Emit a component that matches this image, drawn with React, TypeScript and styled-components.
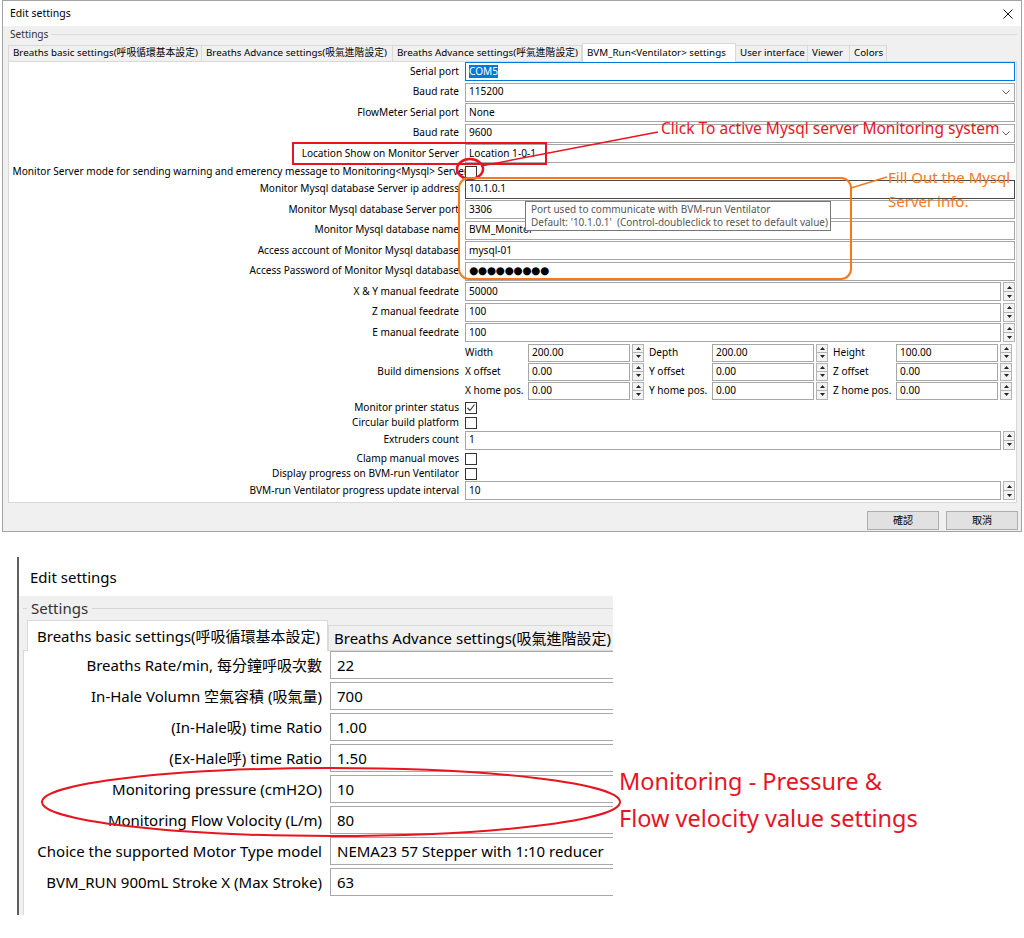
import React from "react";
import styled, { createGlobalStyle, css } from "styled-components";

const FONT = `"Noto Sans", "Noto Sans CJK TC", sans-serif`;
const RED = "#e8141f";
const ORANGE = "#f47920";

const GlobalStyle = createGlobalStyle`
  * { box-sizing: border-box; }
  html, body { margin: 0; padding: 0; background: #ffffff; }
  body { font-family: ${FONT}; color: #000; }
`;

const Page = styled.div`
  position: relative;
  width: 1024px;
  height: 938px;
  overflow: hidden;
  background: #fff;
`;

/* ---------------- top window ---------------- */
const Window = styled.div`
  margin-left: 2px;
  width: 1020px;
  height: 532px;
  border: 1px solid #a3a3a3;
  background: #f0f0f0;
  display: flex;
  flex-direction: column;
  font-size: 10.1px;
  line-height: 1.1;
`;

const TitleBar = styled.div`
  height: 25px;
  flex: none;
  background: #fff;
  display: flex;
  align-items: center;
  justify-content: space-between;
  padding: 0 8px 0 7px;
  font-size: 10.5px;
`;

const WinBody = styled.div`
  flex: 1;
  display: flex;
  flex-direction: column;
  padding: 0 4px 0 5px;
`;

const GroupHeader = styled.div`
  height: 17px;
  flex: none;
  display: flex;
  align-items: center;
  gap: 3px;
  padding-left: 2px;
  color: #333;
  &::after {
    content: "";
    flex: 1;
    height: 1px;
    background: #dcdcdc;
  }
`;

const TabStrip = styled.div`
  height: 18px;
  flex: none;
  display: flex;
  align-items: flex-end;
  position: relative;
  z-index: 1;
`;

const Tab = styled.div<{ $w: number; $active?: boolean }>`
  width: ${(p) => p.$w}px;
  flex: none;
  height: ${(p) => (p.$active ? 19 : 16)}px;
  margin-bottom: ${(p) => (p.$active ? -1 : 0)}px;
  background: ${(p) => (p.$active ? "#fff" : "#f0f0f0")};
  border: 1px solid #d9d9d9;
  border-bottom: none;
  border-left-width: ${(p) => (p.$active ? 1 : 0)}px;
  padding-left: 4px;
  font-size: 9.8px;
  display: flex;
  align-items: center;
  white-space: nowrap;
  overflow: hidden;
  &:first-child {
    border-left-width: 1px;
  }
`;

const Panel = styled.div`
  position: relative;
  height: 442px;
  flex: none;
  background: #fff;
  border: 1px solid #d9d9d9;
  padding-right: 1px;
  display: flex;
  flex-direction: column;
`;

const Row = styled.div<{ $h: number; $gap?: number }>`
  display: grid;
  grid-template-columns: 450px 550px;
  column-gap: 6px;
  height: ${(p) => p.$h}px;
  margin-bottom: ${(p) => p.$gap ?? 0}px;
  align-items: center;
  flex: none;
`;

const Label = styled.div<{ $bleed?: boolean }>`
  display: flex;
  justify-content: flex-end;
  align-items: center;
  white-space: nowrap;
  height: 100%;
  ${(p) =>
    p.$bleed &&
    css`
      margin-right: -9px;
    `}
`;

const toneColor = (t?: string) =>
  t === "focus" ? "#0078d7" : t === "dark" ? "#4a4a4a" : "#a6a6a6";

const Field = styled.div<{ $tone?: string; $h?: number; $w?: number }>`
  height: ${(p) => p.$h ?? 19}px;
  width: ${(p) => (p.$w ? `${p.$w}px` : "100%")};
  flex: ${(p) => (p.$w ? "none" : "1")};
  border: 1px solid ${(p) => toneColor(p.$tone)};
  background: #fff;
  display: flex;
  align-items: center;
  padding: 0 4px 0 3px;
  white-space: nowrap;
  overflow: hidden;
`;

const Selected = styled.span`
  background: #0078d7;
  color: #fff;
  padding: 1px 0;
`;

const Dots = styled.span`
  font-family: "DejaVu Sans", sans-serif;
  font-size: 10.5px;
  letter-spacing: -0.3px;
`;

const Chevron = styled.svg`
  margin-left: auto;
  flex: none;
`;

const SpinBox = styled.div<{ $h?: number }>`
  display: flex;
  height: ${(p) => p.$h ?? 19}px;
  gap: 2px;
  width: 100%;
`;

const SpinCol = styled.div`
  width: 12px;
  flex: none;
  display: flex;
  flex-direction: column;
  height: 100%;
`;

const SpinBtn = styled.div`
  flex: 1;
  border: 1px solid #b4b4b4;
  background: #f3f3f3;
  display: flex;
  align-items: center;
  justify-content: center;
  & + & {
    margin-top: -1px;
  }
`;

const Check = styled.div`
  width: 12px;
  height: 12px;
  border: 1px solid #333;
  background: #fff;
  position: relative;
  z-index: 1;
  display: flex;
  align-items: center;
  justify-content: center;
`;

const DimRows = styled.div`
  display: flex;
  flex-direction: column;
  gap: 1px;
  height: 100%;
`;

const DimRow = styled.div`
  display: flex;
  height: 18px;
  align-items: center;
`;

const DimCell = styled.div`
  display: flex;
  height: 100%;
  align-items: center;
  margin-right: 5px;
`;

const DimLabel = styled.div`
  width: 63px;
  flex: none;
  white-space: nowrap;
`;

const ButtonBar = styled.div`
  flex: 1;
  display: flex;
  justify-content: flex-end;
  align-items: flex-start;
  padding-top: 8px;
  gap: 7px;
  margin-right: -1px;
`;

const Btn = styled.div`
  width: 72px;
  height: 19px;
  background: #e1e1e1;
  border: 1px solid #adadad;
  display: flex;
  align-items: center;
  justify-content: center;
`;

const Tooltip = styled.div`
  position: absolute;
  left: 525px;
  top: 201px;
  width: 306px;
  height: 30px;
  background: #fff;
  border: 1px solid #767676;
  color: #575757;
  font-size: 10px;
  line-height: 13px;
  padding: 1px 0 0 5px;
  white-space: nowrap;
  z-index: 5;
`;

/* ---------------- bottom shot ---------------- */
const Shot = styled.div`
  margin: 25px 0 0 17px;
  width: 596px;
  height: 358px;
  border-left: 2px solid #5f5f5f;
  display: flex;
  flex-direction: column;
  overflow: hidden;
  font-size: 15px;
  line-height: 1.2;
`;

const ShotTitle = styled.div`
  height: 39px;
  flex: none;
  background: #fff;
  display: flex;
  align-items: center;
  padding-left: 11px;
`;

const ShotBody = styled.div`
  flex: 1;
  min-height: 0;
  background: #f0f0f0;
  padding-left: 4px;
  display: flex;
  flex-direction: column;
`;

const ShotHeader = styled.div`
  height: 24px;
  flex: none;
  display: flex;
  align-items: center;
  gap: 4px;
  color: #333;
  &::before {
    content: "";
    width: 4px;
    height: 1px;
    background: #d6d6d6;
  }
  &::after {
    content: "";
    flex: 1;
    height: 1px;
    background: #d6d6d6;
  }
`;

const BigTabStrip = styled.div`
  height: 30px;
  flex: none;
  display: flex;
  align-items: flex-end;
  padding-left: 4px;
  position: relative;
  z-index: 1;
`;

const BigTab = styled.div<{ $w: number; $active?: boolean }>`
  width: ${(p) => p.$w}px;
  flex: none;
  height: ${(p) => (p.$active ? 31 : 25)}px;
  margin-bottom: ${(p) => (p.$active ? -1 : 0)}px;
  background: ${(p) => (p.$active ? "#fff" : "#f0f0f0")};
  border: 1px solid #d9d9d9;
  border-bottom: none;
  padding-left: ${(p) => (p.$active ? 9 : 5)}px;
  display: flex;
  align-items: center;
  white-space: nowrap;
  overflow: hidden;
`;

const ShotPanel = styled.div`
  flex: 1;
  background: #fff;
  border-top: 1px solid #d9d9d9;
  border-left: 1px solid #d9d9d9;
  display: flex;
  flex-direction: column;
  gap: 3px;
`;

const BigRow = styled.div`
  display: grid;
  grid-template-columns: 298px 320px;
  column-gap: 8px;
  height: 28px;
  flex: none;
  align-items: center;
`;

const BigLabel = styled.div`
  display: flex;
  justify-content: flex-end;
  white-space: nowrap;
`;

const BigField = styled.div`
  height: 28px;
  border: 1px solid #a8a8a8;
  background: #fff;
  display: flex;
  align-items: center;
  padding-left: 6px;
  white-space: nowrap;
`;

/* ---------------- annotations ---------------- */
const Overlay = styled.svg`
  position: absolute;
  left: 0;
  top: 0;
  pointer-events: none;
  z-index: 10;
`;

const Note = styled.div<{ $x: number; $y: number; $color: string; $size: number }>`
  position: absolute;
  left: ${(p) => p.$x}px;
  top: ${(p) => p.$y}px;
  color: ${(p) => p.$color};
  font-size: ${(p) => p.$size}px;
  line-height: 1.2;
  white-space: nowrap;
  z-index: 11;
`;

/* ---------------- pieces ---------------- */
const CloseIcon = () => (
  <svg width="10" height="10" viewBox="0 0 10 10">
    <path d="M0.5 0.5 L9.5 9.5 M9.5 0.5 L0.5 9.5" stroke="#111" strokeWidth="1" />
  </svg>
);

const ChevronDown = () => (
  <Chevron width="8" height="5" viewBox="0 0 8 5">
    <polyline points="0.5,0.5 4,4 7.5,0.5" fill="none" stroke="#606060" strokeWidth="1" />
  </Chevron>
);

const Spinner = () => (
  <SpinCol>
    <SpinBtn>
      <svg width="5" height="3" viewBox="0 0 5 3">
        <polygon points="0,3 2.5,0 5,3" fill="#222" />
      </svg>
    </SpinBtn>
    <SpinBtn>
      <svg width="5" height="3" viewBox="0 0 5 3">
        <polygon points="0,0 5,0 2.5,3" fill="#222" />
      </svg>
    </SpinBtn>
  </SpinCol>
);

const CheckBox = ({ checked }: { checked?: boolean }) => (
  <Check>
    {checked && (
      <svg width="10" height="10" viewBox="0 0 10 10">
        <polyline points="1.5,5 4,7.5 8.5,1.5" fill="none" stroke="#333" strokeWidth="1.1" />
      </svg>
    )}
  </Check>
);

type Kind = "text" | "combo" | "check" | "spin";
interface RowDef {
  label: string;
  kind: Kind;
  value?: React.ReactNode;
  checked?: boolean;
  tone?: string;
  bleed?: boolean;
}

const renderRow = (r: RowDef, i: number) => {
  if (r.kind === "check") {
    return (
      <Row key={i} $h={15}>
        <Label $bleed={r.bleed}>{r.label}</Label>
        <CheckBox checked={r.checked} />
      </Row>
    );
  }
  return (
    <Row key={i} $h={19} $gap={1.5}>
      <Label>{r.label}</Label>
      {r.kind === "spin" ? (
        <SpinBox>
          <Field>{r.value}</Field>
          <Spinner />
        </SpinBox>
      ) : (
        <Field $tone={r.tone}>
          {r.value}
          {r.kind === "combo" && <ChevronDown />}
        </Field>
      )}
    </Row>
  );
};

const rowsA: RowDef[] = [
  { label: "Serial port", kind: "text", value: <Selected>COM5</Selected>, tone: "focus" },
  { label: "Baud rate", kind: "combo", value: "115200" },
  { label: "FlowMeter Serial port", kind: "text", value: "None" },
  { label: "Baud rate", kind: "combo", value: "9600" },
  { label: "Location Show on Monitor Server", kind: "text", value: "Location 1-0-1" },
  {
    label: "Monitor Server mode for sending warning and emerency message to Monitoring<Mysql> Server",
    kind: "check",
    bleed: true,
  },
  { label: "Monitor Mysql database Server ip address", kind: "text", value: "10.1.0.1", tone: "dark" },
  { label: "Monitor Mysql database Server port", kind: "text", value: "3306" },
  { label: "Monitor Mysql database name", kind: "text", value: "BVM_Monitor" },
  { label: "Access account of Monitor Mysql database", kind: "text", value: "mysql-01" },
  { label: "Access Password of Monitor Mysql database", kind: "text", value: <Dots>●●●●●●●●●</Dots> },
  { label: "X & Y manual feedrate", kind: "spin", value: "50000" },
  { label: "Z manual feedrate", kind: "spin", value: "100" },
  { label: "E manual feedrate", kind: "spin", value: "100" },
];

const rowsB: RowDef[] = [
  { label: "Monitor printer status", kind: "check", checked: true },
  { label: "Circular build platform", kind: "check" },
  { label: "Extruders count", kind: "spin", value: "1" },
  { label: "Clamp manual moves", kind: "check" },
  { label: "Display progress on BVM-run Ventilator", kind: "check" },
  { label: "BVM-run Ventilator progress update interval", kind: "spin", value: "10" },
];

const dims = [
  [
    ["Width", "200.00"],
    ["Depth", "200.00"],
    ["Height", "100.00"],
  ],
  [
    ["X offset", "0.00"],
    ["Y offset", "0.00"],
    ["Z offset", "0.00"],
  ],
  [
    ["X home pos.", "0.00"],
    ["Y home pos.", "0.00"],
    ["Z home pos.", "0.00"],
  ],
];

const tabs = [
  { t: "Breaths basic settings(呼吸循環基本設定)", w: 194 },
  { t: "Breaths Advance settings(吸氣進階設定)", w: 191 },
  { t: "Breaths Advance settings(呼氣進階設定)", w: 189 },
  { t: "BVM_Run<Ventilator> settings", w: 154, active: true },
  { t: "User interface", w: 72 },
  { t: "Viewer", w: 42 },
  { t: "Colors", w: 37 },
];

const bigRows = [
  ["Breaths Rate/min, 每分鐘呼吸次數", "22"],
  ["In-Hale Volumn 空氣容積 (吸氣量)", "700"],
  ["(In-Hale吸) time Ratio", "1.00"],
  ["(Ex-Hale呼) time Ratio", "1.50"],
  ["Monitoring pressure (cmH2O)", "10"],
  ["Monitoring Flow Volocity (L/m)", "80"],
  ["Choice the supported Motor Type model", "NEMA23 57 Stepper with 1:10 reducer"],
  ["BVM_RUN 900mL Stroke X (Max Stroke)", "63"],
];

export default function App() {
  return (
    <Page>
      <GlobalStyle />
      <Window>
        <TitleBar>
          <span>Edit settings</span>
          <CloseIcon />
        </TitleBar>
        <WinBody>
          <GroupHeader>Settings</GroupHeader>
          <TabStrip>
            {tabs.map((t) => (
              <Tab key={t.t} $w={t.w} $active={t.active}>
                {t.t}
              </Tab>
            ))}
          </TabStrip>
          <Panel>
            {rowsA.map(renderRow)}
            <Row $h={56} $gap={1}>
              <Label>Build dimensions</Label>
              <DimRows>
                {dims.map((row, ri) => (
                  <DimRow key={ri}>
                    {row.map(([l, v]) => (
                      <DimCell key={l}>
                        <DimLabel>{l}</DimLabel>
                        <SpinBox $h={18}>
                          <Field $h={18} $w={102}>
                            {v}
                          </Field>
                          <Spinner />
                        </SpinBox>
                      </DimCell>
                    ))}
                  </DimRow>
                ))}
              </DimRows>
            </Row>
            {rowsB.map(renderRow)}
          </Panel>
          <ButtonBar>
            <Btn>確認</Btn>
            <Btn>取消</Btn>
          </ButtonBar>
        </WinBody>
      </Window>

      <Tooltip>
        Port used to communicate with BVM-run Ventilator
        <br />
        Default: '10.1.0.1'&nbsp;&nbsp;(Control-doubleclick to reset to default value)
      </Tooltip>

      <Shot>
        <ShotTitle>Edit settings</ShotTitle>
        <ShotBody>
          <ShotHeader>Settings</ShotHeader>
          <BigTabStrip>
            <BigTab $w={301} $active>
              Breaths basic settings(呼吸循環基本設定)
            </BigTab>
            <BigTab $w={300}>Breaths Advance settings(吸氣進階設定)</BigTab>
          </BigTabStrip>
          <ShotPanel>
            {bigRows.map(([l, v]) => (
              <BigRow key={l}>
                <BigLabel>{l}</BigLabel>
                <BigField>{v}</BigField>
              </BigRow>
            ))}
          </ShotPanel>
        </ShotBody>
      </Shot>

      <Overlay width="1024" height="938" viewBox="0 0 1024 938">
        <rect x="293" y="143" width="253" height="21" fill="none" stroke={RED} strokeWidth="2" />
        <ellipse cx="470" cy="169" rx="13" ry="10" fill="none" stroke={RED} strokeWidth="2.5" />
        <line x1="481" y1="166" x2="658" y2="132" stroke={RED} strokeWidth="1.5" />
        <rect x="459" y="178" width="392" height="101" rx="10" fill="none" stroke={ORANGE} strokeWidth="2" />
        <line x1="851" y1="188" x2="887" y2="177" stroke={ORANGE} strokeWidth="1.5" />
        <ellipse cx="331" cy="802" rx="289" ry="34" fill="none" stroke={RED} strokeWidth="2" />
      </Overlay>

      <Note $x={661} $y={119} $color={RED} $size={15.5}>
        Click To active Mysql server Monitoring system
      </Note>
      <Note $x={888} $y={168} $color={ORANGE} $size={15}>
        Fill Out the Mysql
      </Note>
      <Note $x={888} $y={192} $color={ORANGE} $size={15}>
        Server info.
      </Note>
      <Note $x={619} $y={767} $color={RED} $size={23.5}>
        Monitoring - Pressure &amp;
      </Note>
      <Note $x={619} $y={804} $color={RED} $size={23.5}>
        Flow velocity value settings
      </Note>
    </Page>
  );
}
